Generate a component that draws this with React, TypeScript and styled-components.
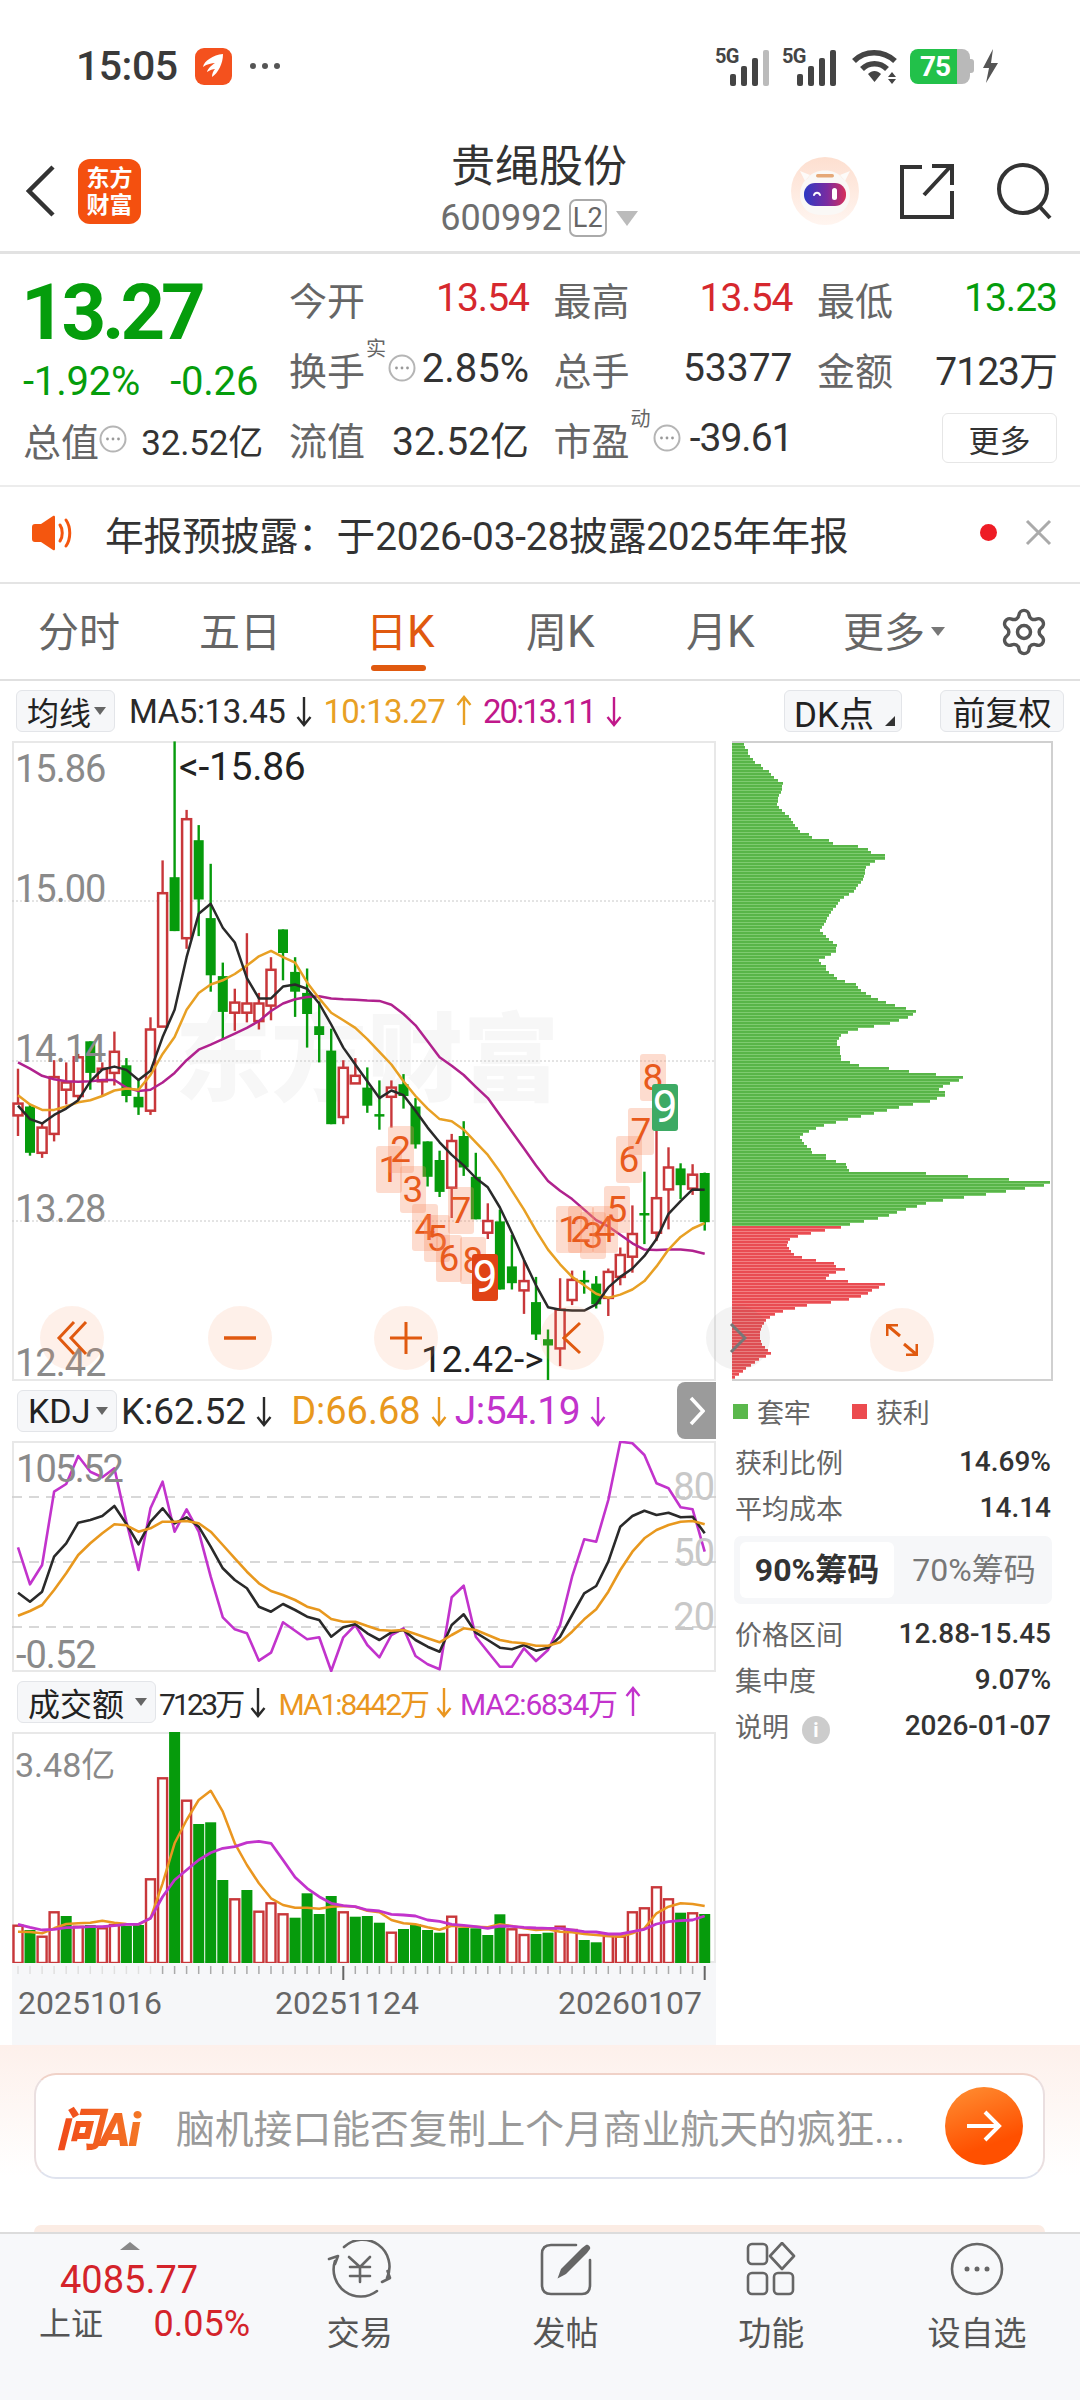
import * as React from 'react';
import styled, { createGlobalStyle } from 'styled-components';
import { Settings } from 'lucide-react';

const FONT = `Roboto, "Noto Sans CJK SC", sans-serif`;

// chart data, read off the reference, in reference-crop units
const STEP = 26.105;
const cx = (i: number) => 39 + i * STEP;

const CANDLES: number[][] = [
  [805, 888, 916, 965, 0], [890, 895, 1005, 1012, 1], [935, 945, 1005, 1017, 0], [785, 825, 960, 978, 0],
  [790, 838, 855, 890, 0], [770, 778, 870, 880, 0], [740, 740, 815, 855, 1], [790, 805, 835, 868, 0],
  [717, 765, 815, 845, 0], [780, 797, 870, 885, 1], [830, 872, 897, 915, 1], [683, 712, 905, 915, 0],
  [310, 388, 705, 705, 0], [27, 350, 478, 478, 1], [190, 212, 495, 520, 0], [226, 262, 403, 490, 1],
  [318, 447, 583, 622, 1], [553, 585, 670, 735, 1], [615, 648, 672, 715, 0], [483, 650, 672, 695, 0],
  [625, 650, 692, 712, 0], [540, 570, 655, 690, 0], [474, 474, 530, 595, 1], [540, 575, 622, 682, 1],
  [567, 625, 675, 755, 1], [645, 704, 725, 790, 1], [710, 762, 937, 937, 1], [785, 803, 920, 937, 0],
  [780, 822, 840, 840, 0], [802, 850, 893, 910, 1], [833, 913, 917, 950, 1], [833, 850, 872, 945, 0],
  [818, 842, 870, 900, 1], [875, 895, 985, 995, 1], [978, 978, 1062, 1085, 1], [1000, 1022, 1098, 1110, 1],
  [960, 977, 1088, 1160, 0], [930, 965, 1040, 1060, 1], [1005, 1062, 1163, 1163, 1], [1125, 1167, 1195, 1210, 0],
  [1140, 1168, 1330, 1330, 1], [1200, 1275, 1315, 1330, 1], [1260, 1310, 1332, 1388, 0], [1300, 1360, 1437, 1450, 1],
  [1425, 1448, 1463, 1545, 1], [1303, 1378, 1470, 1512, 0], [1285, 1307, 1355, 1367, 0], [1285, 1307, 1312, 1340, 1],
  [1298, 1316, 1365, 1375, 1], [1280, 1288, 1350, 1393, 0], [1230, 1248, 1300, 1320, 0], [1130, 1198, 1252, 1290, 0],
  [1050, 1148, 1153, 1222, 1], [900, 1113, 1195, 1215, 0], [992, 1040, 1092, 1187, 0], [1030, 1042, 1082, 1115, 1],
  [1032, 1057, 1090, 1105, 0], [1052, 1053, 1170, 1190, 1],
];

const MA5 = [893, 925, 935, 915, 900, 880, 835, 807, 800, 808, 832, 810, 730, 665, 540, 437, 413, 470, 505, 590, 638, 638, 610, 605, 615, 650, 700, 755, 795, 835, 875, 857, 868, 905, 945, 980, 1010, 1035, 1065, 1087, 1135, 1195, 1260, 1320, 1372, 1378, 1380, 1380, 1365, 1325, 1300, 1280, 1250, 1210, 1150, 1120, 1092, 1093];
const MA10 = [868, 890, 903, 903, 895, 885, 880, 870, 857, 852, 855, 820, 770, 730, 665, 625, 605, 595, 580, 560, 538, 525, 540, 553, 600, 638, 672, 690, 708, 735, 765, 795, 835, 870, 900, 925, 930, 950, 980, 1010, 1050, 1095, 1140, 1190, 1235, 1270, 1300, 1320, 1340, 1350, 1342, 1330, 1310, 1275, 1235, 1205, 1185, 1172];
const MA20 = [790, 805, 822, 830, 835, 836, 835, 832, 832, 850, 858, 855, 838, 815, 785, 760, 748, 735, 722, 708, 692, 668, 650, 640, 635, 633, 638, 640, 641, 643, 644, 653, 675, 702, 740, 778, 798, 820, 848, 875, 915, 955, 995, 1035, 1072, 1095, 1115, 1140, 1165, 1180, 1200, 1220, 1235, 1236, 1235, 1235, 1238, 1245];

const K_LINE = [638, 665, 635, 530, 490, 428, 420, 408, 378, 432, 493, 425, 385, 430, 412, 440, 500, 565, 600, 625, 680, 695, 672, 690, 710, 720, 770, 742, 733, 760, 780, 757, 750, 780, 800, 815, 735, 703, 758, 780, 803, 808, 795, 812, 803, 770, 705, 640, 618, 545, 440, 408, 392, 405, 398, 412, 410, 460];
const D_LINE = [707, 693, 675, 630, 580, 525, 490, 460, 433, 436, 455, 445, 425, 425, 423, 430, 455, 495, 535, 575, 610, 633, 645, 660, 680, 690, 717, 725, 725, 738, 750, 752, 750, 762, 775, 787, 765, 745, 750, 765, 780, 787, 790, 797, 797, 787, 755, 718, 688, 635, 570, 515, 475, 450, 435, 425, 423, 433];
const J_LINE = [502, 613, 555, 335, 312, 228, 275, 292, 265, 425, 570, 385, 305, 455, 388, 455, 590, 712, 748, 760, 842, 818, 727, 752, 778, 772, 873, 772, 735, 795, 832, 765, 745, 828, 853, 868, 652, 617, 770, 815, 860, 860, 805, 843, 810, 735, 590, 478, 485, 360, 185, 190, 225, 310, 325, 382, 388, 515];

const VOL = [737, 750, 770, 697, 708, 740, 735, 745, 735, 738, 735, 598, 295, 155, 362, 432, 427, 600, 658, 630, 695, 670, 703, 713, 640, 702, 648, 697, 710, 708, 728, 758, 747, 733, 750, 758, 710, 743, 745, 765, 703, 748, 765, 762, 758, 740, 750, 780, 787, 768, 770, 697, 685, 622, 658, 698, 700, 702];
const VOL_GREEN = [1, 4, 6, 9, 10, 13, 15, 16, 17, 19, 23, 24, 25, 26, 28, 29, 30, 32, 33, 34, 35, 37, 38, 39, 40, 43, 44, 47, 48, 55, 57];
const VOL_MA1 = [755, 756, 760, 745, 732, 730, 728, 722, 728, 732, 733, 715, 610, 490, 420, 360, 332, 395, 490, 555, 610, 655, 675, 683, 683, 686, 680, 678, 680, 692, 697, 720, 730, 733, 742, 749, 737, 740, 740, 742, 733, 738, 745, 750, 748, 755, 757, 762, 765, 768, 770, 760, 745, 700, 680, 670, 672, 678];
const VOL_MA2 = [733, 742, 750, 748, 743, 742, 740, 740, 737, 733, 733, 715, 650, 600, 570, 540, 518, 505, 500, 488, 484, 490, 540, 592, 625, 650, 670, 677, 680, 690, 693, 703, 705, 708, 720, 724, 733, 736, 740, 745, 738, 739, 742, 744, 745, 745, 750, 755, 756, 762, 762, 755, 748, 732, 725, 722, 720, 708];

const CHIP_GREEN = [[27, 75], [45, 85], [65, 100], [80, 125], [95, 150], [120, 190], [135, 188], [150, 178], [170, 172], [200, 210], [230, 235], [245, 270], [260, 330], [270, 415], [280, 445], [290, 480], [297, 497], [305, 465], [318, 440], [345, 432], [375, 405], [395, 365], [425, 335], [470, 302], [490, 330], [505, 352], [520, 350], [540, 297], [560, 320], [580, 345], [600, 410], [620, 440], [640, 500], [655, 560], [663, 590], [675, 565], [690, 510], [705, 405], [718, 365], [735, 350], [750, 362], [775, 365], [790, 420], [800, 510], [810, 570], [815, 650], [822, 730], [835, 680], [850, 650], [860, 677], [875, 630], [885, 560], [895, 510], [905, 455], [915, 400], [930, 320], [945, 270], [958, 240], [975, 255], [995, 275], [1010, 320], [1025, 380], [1040, 390], [1050, 620], [1060, 745], [1065, 870], [1072, 993], [1080, 930], [1090, 850], [1098, 780], [1105, 715], [1115, 630], [1125, 590], [1135, 545], [1148, 500], [1155, 465], [1165, 400], [1170, 380]];
const CHIP_RED = [[1172, 380], [1180, 325], [1190, 265], [1200, 215], [1215, 200], [1240, 225], [1255, 290], [1265, 345], [1275, 378], [1285, 335], [1295, 315], [1303, 385], [1312, 497], [1320, 465], [1330, 450], [1340, 420], [1350, 360], [1360, 260], [1375, 185], [1385, 155], [1400, 135], [1425, 120], [1450, 125], [1475, 155], [1490, 115], [1510, 80], [1535, 40]];

// nine-turn markers, centre in px inside the price chart
const MARKS = [
  [147, 507, '1'], [182, 446, '2'], [219, 568, '3'], [255, 680, '4'], [291, 715, '5'], [327, 775, '6'], [363, 630, '7'], [399, 781, '8'],
  [686, 688, '1'], [722, 688, '2'], [759, 705, '3'], [795, 688, '4'], [831, 628, '5'], [867, 476, '6'], [903, 392, '7'], [939, 230, '8'],
].map(([x, y, t]) => ({ left: 340 + (x as number) / 3 - 12, top: 1000 + (y as number) / 3 - 741, text: t as string }));

const priceX = (z: number) => +(z / 2.167 - 12).toFixed(1);
const priceY = (z: number) => +(z / 2.377 - 11).toFixed(1);
const kdjY = (z: number) => +(z / 3 - 61).toFixed(1);
const volY = (z: number) => +(z / 3 - 52).toFixed(1);

const linePoints = (series: number[], toY: (z: number) => number) =>
  series.map((v, i) => `${priceX(cx(i))},${toY(v)}`).join(' ');

// widest point of the profile between two heights, so thin peaks are not lost
const chipWidth = (points: number[][], from: number, to: number) => {
  let best = 0;
  for (let i = 1; i < points.length; i++) {
    const [y0, x0] = points[i - 1];
    const [y1, x1] = points[i];
    if (y0 >= from && y0 < to) best = Math.max(best, x0);
    if (from >= y0 && from <= y1) best = Math.max(best, x0 + ((x1 - x0) * (from - y0)) / (y1 - y0));
  }
  return best;
};

const GlobalStyle = createGlobalStyle`
  html, body { margin: 0; padding: 0; background: #fff; }
  * { box-sizing: border-box; }
`;

const Page = styled.div`
  width: 1080px;
  height: 2400px;
  overflow: hidden;
  background: #fff;
  font-family: ${FONT};
  color: #333;
`;

const StatusBar = styled.div`
  height: 130px;
  padding: 46px 81px 0 76px;
  display: flex;
  justify-content: space-between;
  align-items: flex-start;
`;

const StatusGroup = styled.div`
  display: flex;
  align-items: center;
  height: 40px;
`;

const Clock = styled.span`
  font-size: 41px;
  font-weight: 500;
  color: #3a3a3a;
  letter-spacing: -0.5px;
  margin-right: 17px;
`;

const AppBadge = styled.div`
  width: 37px;
  height: 37px;
  border-radius: 9px;
  background: #f4511e;
  display: flex;
  align-items: center;
  justify-content: center;
  margin-right: 17px;
`;

const SignalWrap = styled.div`
  display: flex;
  align-items: flex-end;
  height: 40px;
`;

const SignalName = styled.span`
  align-self: flex-start;
  font-size: 20px;
  line-height: 20px;
  font-weight: 700;
  color: #444;
  width: 26px;
  margin-right: -11px;
  letter-spacing: -0.6px;
`;

const BatteryBody = styled.div`
  width: 60px;
  height: 35px;
  border-radius: 8px;
  background: linear-gradient(90deg, #22c14a 0 79%, #b9b9b9 79%);
  color: #fff;
  font-size: 28px;
  font-weight: 700;
  display: flex;
  align-items: center;
  justify-content: center;
  padding-right: 10px;
  letter-spacing: -1px;
`;

const BatteryNub = styled.div`
  width: 4px;
  height: 14px;
  background: #b9b9b9;
  border-radius: 0 3px 3px 0;
`;

const Header = styled.header`
  height: 124px;
  display: grid;
  grid-template-columns: 1fr auto 1fr;
  align-items: center;
  border-bottom: 3px solid #e2e2e2;
  padding: 0 28px 0 26px;
`;

const HeaderLeft = styled.div`
  display: flex;
  align-items: center;
  gap: 23px;
  padding-top: 1px;
`;

const Logo = styled.div`
  width: 63px;
  height: 65px;
  border-radius: 12px;
  background: #f4500f;
  color: #fff;
  font-size: 23px;
  line-height: 27px;
  text-align: center;
  padding-top: 6px;
  font-weight: 700;
`;

const HeaderTitle = styled.div`
  display: flex;
  flex-direction: column;
  align-items: center;
`;

const StockName = styled.div`
  font-size: 44px;
  line-height: 56px;
  color: #333;
  margin-top: -3px;
`;

const StockCode = styled.div`
  display: flex;
  align-items: center;
  font-size: 36px;
  line-height: 42px;
  color: #6e6e6e;
  margin-top: 2px;
`;

const LevelTag = styled.span`
  width: 38px;
  height: 38px;
  border: 2px solid #aaa;
  border-radius: 7px;
  font-size: 27px;
  line-height: 34px;
  text-align: center;
  margin: 0 9px 0 7px;
  color: #666;
`;

const DownTriangle = styled.span<{ $w: number; $color?: string }>`
  display: inline-block;
  width: 0;
  height: 0;
  border-left: ${(p) => p.$w}px solid transparent;
  border-right: ${(p) => p.$w}px solid transparent;
  border-top: ${(p) => p.$w * 1.4}px solid ${(p) => p.$color ?? '#bbb'};
`;

const HeaderRight = styled.div`
  display: flex;
  justify-content: flex-end;
  align-items: center;
  padding-top: 1px;
`;

const Avatar = styled.div`
  width: 70px;
  height: 70px;
  margin-right: 40px;
`;

const QuotePanel = styled.section`
  height: 233px;
  padding: 9px 22px 0 24px;
  display: flex;
  border-bottom: 2px solid #ececec;
`;

const PriceColumn = styled.div`
  width: 265px;
  display: flex;
  flex-direction: column;
`;

const MainPrice = styled.div`
  height: 84px;
  margin: 4px 0 0 -3px;
  font-size: 78px;
  line-height: 92px;
  font-weight: 700;
  color: #059d0c;
  letter-spacing: -4.2px;
`;

const ChangeRow = styled.div`
  height: 52px;
  display: flex;
  font-size: 40px;
  line-height: 50px;
  color: #059d0c;
  gap: 30px;
  margin: 6px 0 0 -1px;
  letter-spacing: -0.2px;
`;

const QuoteGrid = styled.div`
  flex: 1;
  display: grid;
  grid-template-columns: 240px 239px 240px;
  column-gap: 24.5px;
  grid-auto-rows: 70px;
`;

const Cell = styled.div<{ $w?: number; $h?: number }>`
  ${(p) => (p.$w ? `width: ${p.$w}px;` : '')}
  ${(p) => (p.$h ? `height: ${p.$h}px;` : '')}
  display: flex;
  align-items: center;
  justify-content: space-between;
  position: relative;
`;

const LeftCell = styled(Cell)`
  margin: -3px 0 0 -1px;
`;

const CellLabel = styled.span`
  display: flex;
  align-items: center;
  color: #666;
  font-size: 38px;
`;

const CellValue = styled.span<{ $color?: string; $size?: number; $ls?: number }>`
  color: ${(p) => p.$color ?? '#333'};
  font-size: ${(p) => p.$size ?? 39}px;
  letter-spacing: ${(p) => p.$ls ?? 0}px;
  white-space: nowrap;
`;

const SupText = styled.sup`
  font-size: 20px;
  line-height: 20px;
  color: #666;
  align-self: flex-start;
  margin: -2px 2px 0 1px;
`;

const MoreButton = styled.button`
  margin-left: auto;
  width: 115px;
  height: 50px;
  border: 1.5px solid #e6e6e6;
  border-radius: 6px;
  background: #fff;
  font-family: ${FONT};
  font-size: 31px;
  color: #333;
  padding: 0;
`;

const Notice = styled.section`
  height: 97px;
  display: flex;
  align-items: center;
  padding: 0 28px 4px 31px;
  border-bottom: 2px solid #e4e4e4;
`;

const NoticeText = styled.span`
  flex: 1;
  margin-left: 31px;
  font-size: 38.8px;
  letter-spacing: -0.2px;
  color: #333;
  white-space: nowrap;
`;

const NoticeDot = styled.span`
  width: 17px;
  height: 17px;
  border-radius: 50%;
  background: #ee1c25;
  margin-right: 28px;
`;

const Tabs = styled.nav`
  height: 97px;
  display: flex;
  align-items: center;
  padding-left: 38px;
  border-bottom: 2px solid #e0e0e0;
  position: relative;
`;

const Tab = styled.div<{ $active?: boolean; $width: number }>`
  width: ${(p) => p.$width}px;
  font-size: 41px;
  line-height: 50px;
  padding-top: 2px;
  color: ${(p) => (p.$active ? '#e0590f' : '#666')};
  position: relative;
  &::after {
    content: '';
    display: ${(p) => (p.$active ? 'block' : 'none')};
    position: absolute;
    left: 5px;
    top: 60px;
    width: 55px;
    height: 6px;
    border-radius: 3px;
    background: #e0590f;
  }
`;

const TabSuffix = styled.span`
  font-size: 44px;
  letter-spacing: 1px;
`;

const ToolRow = styled.div`
  height: 60px;
  display: flex;
  align-items: center;
  padding: 0 16px;
  gap: 10px;
`;

const DropButton = styled.div<{ $width: number; $size?: number }>`
  width: ${(p) => p.$width}px;
  height: 42px;
  background: #f6f7f9;
  border: 1.5px solid #e3e5e9;
  border-radius: 6px;
  display: flex;
  align-items: center;
  justify-content: space-between;
  padding: 0 8px 0 10px;
  font-size: ${(p) => p.$size ?? 32}px;
  color: #222;
  flex-shrink: 0;
`;

const Legend = styled.span<{ $color: string; $size?: number; $ls?: number; $ml?: number }>`
  color: ${(p) => p.$color};
  font-size: ${(p) => p.$size ?? 33}px;
  letter-spacing: ${(p) => p.$ls ?? -0.2}px;
  margin-left: ${(p) => p.$ml ?? 0}px;
  white-space: nowrap;
`;

const ToolSpacer = styled.div<{ $w?: number }>`
  ${(p) => (p.$w ? `width: ${p.$w}px;` : 'flex: 1;')}
`;

const CornerMark = styled.span`
  position: absolute;
  right: 6px;
  bottom: 5px;
  width: 0;
  height: 0;
  border-left: 10px solid transparent;
  border-bottom: 10px solid #333;
`;

const SwitchButton = styled.div<{ $width: number; $size?: number; $pad?: number }>`
  position: relative;
  width: ${(p) => p.$width}px;
  height: 42px;
  background: #f6f7f9;
  border: 1.5px solid #e3e5e9;
  border-radius: 6px;
  display: flex;
  align-items: center;
  justify-content: center;
  font-size: ${(p) => p.$size ?? 33}px;
  padding-right: ${(p) => p.$pad ?? 0}px;
  color: #222;
  flex-shrink: 0;
`;

const ChartsRow = styled.div`
  height: 1304px;
  position: relative;
  display: flex;
  padding-left: 12px;
`;

const LeftColumn = styled.div`
  width: 704px;
  display: flex;
  flex-direction: column;
`;

const RightColumn = styled.div`
  width: 321px;
  margin-left: 16px;
  display: flex;
  flex-direction: column;
`;

const ChartBox = styled.div<{ $h: number }>`
  position: relative;
  width: 704px;
  height: ${(p) => p.$h}px;
  overflow: hidden;
  flex-shrink: 0;
  outline: 2px solid #e8e8e8;
  outline-offset: -2px;
`;

const ChartSvg = styled.svg`
  position: absolute;
  left: 0;
  top: 0;
`;

const Watermark = styled.div`
  position: absolute;
  left: 163px;
  top: 264px;
  font-size: 96px;
  line-height: 110px;
  font-weight: 900;
  color: #f7f7f7;
  white-space: nowrap;
`;

const AxisLabel = styled.span<{ $left?: number; $right?: number; $top: number; $color?: string; $size?: number; $ls?: number }>`
  position: absolute;
  ${(p) => (p.$right !== undefined ? `right: ${p.$right}px;` : `left: ${p.$left}px;`)}
  top: ${(p) => p.$top}px;
  transform: translateY(-50%);
  font-size: ${(p) => p.$size ?? 38}px;
  letter-spacing: ${(p) => p.$ls ?? -1}px;
  line-height: 34px;
  color: ${(p) => p.$color ?? '#8a8a8a'};
  white-space: nowrap;
`;

const TurnMark = styled.span<{ $bg?: string; $color?: string; $size?: number }>`
  position: absolute;
  width: 26px;
  height: 47px;
  margin: -23px 0 0 -13px;
  border-radius: 3px;
  background: ${(p) => p.$bg ?? 'rgba(250, 140, 95, 0.3)'};
  color: ${(p) => p.$color ?? '#e85a1c'};
  font-size: ${(p) => p.$size ?? 37}px;
  line-height: 47px;
  text-align: center;
`;

const RoundButton = styled.div<{ $left: number; $top: number; $gray?: boolean }>`
  position: absolute;
  left: ${(p) => p.$left - 32}px;
  top: ${(p) => p.$top - 32}px;
  width: 64px;
  height: 64px;
  border-radius: 50%;
  background: ${(p) => (p.$gray ? 'rgba(100, 100, 100, 0.08)' : 'rgba(245, 150, 100, 0.14)')};
  display: flex;
  align-items: center;
  justify-content: center;
`;

const IndicatorBar = styled.div<{ $gap?: number }>`
  height: 60px;
  display: flex;
  align-items: center;
  padding-left: 5px;
  gap: ${(p) => p.$gap ?? 9}px;
  position: relative;
  flex-shrink: 0;
`;

const SidePager = styled.div`
  position: absolute;
  right: 0;
  top: 1px;
  width: 39px;
  height: 57px;
  background: #9b9b9b;
  border-radius: 8px 0 0 8px;
  display: flex;
  align-items: center;
  justify-content: center;
`;

const DateStrip = styled.div`
  height: 82px;
  background: #f6f7f9;
  position: relative;
  display: grid;
  grid-template-columns: 257px 283px auto;
  padding: 19px 0 0 6px;
  font-size: 32px;
  line-height: 42px;
  color: #666;
`;

const ChipBox = styled.div`
  width: 321px;
  height: 640px;
  position: relative;
  border: 2px solid #d0d0d0;
  border-left: none;
`;

const ChipLegend = styled.div`
  height: 60px;
  display: flex;
  align-items: center;
  font-size: 27px;
  color: #666;
  padding-left: 1px;
`;

const ChipSwatch = styled.span<{ $color: string }>`
  width: 15px;
  height: 15px;
  background: ${(p) => p.$color};
  margin-right: 9px;
`;

const ChipLegendName = styled.span`
  width: 95px;
  letter-spacing: -0.3px;
`;

const ChipRow = styled.div<{ $h: number }>`
  height: ${(p) => p.$h}px;
  display: flex;
  align-items: center;
  justify-content: space-between;
  padding: 0 2px 0 3px;
  font-size: 27px;
  color: #666;
`;

const FirstChipRow = styled(ChipRow)`
  margin-top: -3px;
`;

const ChipValue = styled.span`
  font-size: 28px;
  font-weight: 500;
  color: #333;
`;

const InfoDot = styled.span`
  width: 28px;
  height: 28px;
  border-radius: 50%;
  background: #ccc;
  color: #fff;
  font-size: 20px;
  font-weight: 700;
  line-height: 28px;
  text-align: center;
  margin-left: 13px;
  display: inline-block;
`;

const RangeTabs = styled.div`
  height: 68px;
  margin: 6px 1px 6px 2px;
  padding: 6px;
  border-radius: 7px;
  background: #f6f7f9;
  display: grid;
  grid-template-columns: 154px 1fr;
  font-size: 32px;
  text-align: center;
`;

const RangeTab = styled.div<{ $active?: boolean }>`
  line-height: 56px;
  border-radius: 6px;
  background: ${(p) => (p.$active ? '#fff' : 'transparent')};
  color: ${(p) => (p.$active ? '#333' : '#777')};
  font-weight: ${(p) => (p.$active ? 700 : 400)};
  padding-left: ${(p) => (p.$active ? 0 : 8)}px;
`;

const AiSection = styled.section`
  height: 187px;
  padding: 28px 35px 0 34px;
  background: linear-gradient(#fdf0eb, #fff 70%);
  display: flex;
  flex-direction: column;
  justify-content: space-between;
`;

const AiInput = styled.div`
  height: 106px;
  border-radius: 22px;
  background: #fff;
  border: 2px solid;
  border-color: #f0d2c8 #eadfe0 #dfe3ee;
  display: flex;
  align-items: center;
  padding: 0 20px;
`;

const AiLogo = styled.span`
  font-size: 46px;
  font-weight: 900;
  font-style: italic;
  letter-spacing: -2px;
  width: 120px;
  flex-shrink: 0;
  background: linear-gradient(90deg, #f0481a, #f58a2a);
  -webkit-background-clip: text;
  background-clip: text;
  color: transparent;
`;

const AiText = styled.span`
  flex: 1;
  font-size: 38.8px;
  color: #9a9a9a;
  white-space: nowrap;
  overflow: hidden;
`;

const AiSend = styled.div`
  width: 78px;
  height: 78px;
  border-radius: 50%;
  background: linear-gradient(160deg, #ff9034, #ff5000 70%);
  display: flex;
  align-items: center;
  justify-content: center;
  flex-shrink: 0;
`;

const PeekCard = styled.div`
  height: 7px;
  border-radius: 18px 18px 0 0;
  background: #fbece4;
`;

const BottomNav = styled.nav`
  height: 168px;
  background: #f7f8fa;
  border-top: 2px solid #dcdcdc;
  display: grid;
  grid-template-columns: 257px repeat(4, 205.7px);
`;

const IndexCell = styled.div`
  padding: 8px 0 0 39px;
  display: flex;
  flex-direction: column;
`;

const UpTriangle = styled.span`
  width: 0;
  height: 0;
  margin-left: 81px;
  border-left: 10px solid transparent;
  border-right: 10px solid transparent;
  border-bottom: 8px solid #888;
`;

const IndexValue = styled.div`
  font-size: 38px;
  line-height: 44px;
  margin: 8px 0 0 21px;
  color: #d4232a;
`;

const IndexRow = styled.div`
  display: flex;
  align-items: center;
  justify-content: space-between;
  font-size: 32px;
  line-height: 44px;
  color: #555;
  width: 211px;
`;

const IndexChange = styled.span`
  font-size: 36px;
  color: #d4232a;
`;

const NavItem = styled.div`
  padding-top: 7px;
  display: flex;
  flex-direction: column;
  align-items: center;
  font-size: 33px;
  color: #555;
`;

const NavIcon = styled.div`
  height: 56px;
  display: flex;
  align-items: center;
  justify-content: center;
  margin-bottom: 15px;
`;

const NavLabel = styled.span`
  line-height: 44px;
`;

const ArrowMark = ({ up, color }: { up?: boolean; color: string }) => (
  <svg width="18" height="32" viewBox="0 0 18 32" style={{ flexShrink: 0 }}>
    <path
      d={up ? 'M9 30V2M2.5 10L9 2L15.5 10' : 'M9 2V30M2.5 22L9 30L15.5 22'}
      fill="none"
      stroke={color}
      strokeWidth="2.4"
    />
  </svg>
);

const DotsRing = () => (
  <svg width="28" height="28" viewBox="0 0 28 28" style={{ flexShrink: 0 }}>
    <circle cx="14" cy="14" r="12.5" fill="none" stroke="#b5b5b5" strokeWidth="2" />
    <circle cx="8.5" cy="14" r="1.4" fill="#999" />
    <circle cx="14" cy="14" r="1.4" fill="#999" />
    <circle cx="19.5" cy="14" r="1.4" fill="#999" />
  </svg>
);

const SignalIcon = ({ dim }: { dim?: boolean }) => (
  <SignalWrap>
    <SignalName>5G</SignalName>
    <svg width="43" height="36" viewBox="0 0 43 36" style={{ display: 'block' }}>
      <rect x="0" y="24" width="6" height="12" rx="2" fill="#444" />
      <rect x="11" y="16" width="6" height="20" rx="2" fill="#444" />
      <rect x="22" y="8" width="6" height="28" rx="2" fill="#444" />
      <rect x="33" y="0" width="6" height="36" rx="2" fill={dim ? '#bbb' : '#444'} />
    </svg>
  </SignalWrap>
);

const RobotAvatar = () => (
  <svg width="70" height="70" viewBox="0 0 70 70" style={{ display: 'block' }}>
    <defs>
      <linearGradient id="halo" x1="0" x2="0" y1="0" y2="1">
        <stop offset="0" stopColor="#fddfd0" />
        <stop offset="1" stopColor="#fff5f0" />
      </linearGradient>
      <linearGradient id="visor" x1="0" x2="1">
        <stop offset="0" stopColor="#2c3bc4" />
        <stop offset="0.55" stopColor="#7a2ba0" />
        <stop offset="1" stopColor="#d6305a" />
      </linearGradient>
    </defs>
    <circle cx="35" cy="35" r="34" fill="url(#halo)" />
    <path d="M10 15L15 25L20 19zM60 15L55 25L50 19z" fill="#fdfbf9" />
    <path d="M18 22C24 12 46 12 52 22C60 27 62 40 58 48C54 58 44 59 35 59S16 58 12 48C8 40 10 27 18 22z" fill="#faf8f6" />
    <rect x="26" y="18" width="18" height="3.500" rx="1.700" fill="#e5a877" />
    <rect x="14" y="27" width="42" height="23" rx="11" fill="url(#visor)" />
    <path d="M24 39c1-3 5-3 6 0" fill="none" stroke="#fff" strokeWidth="2" strokeLinecap="round" />
    <rect x="42" y="32" width="5" height="12" rx="2.500" fill="#fff" />
  </svg>
);

const PriceChart = () => {
  const grid = [160, 320, 480];
  return (
    <ChartSvg width="704" height="640">
      {grid.map((y) => (
        <line key={y} x1="0" x2="704" y1={y} y2={y} stroke="#c8c8c8" strokeWidth="1" strokeDasharray="2 2" />
      ))}
      {CANDLES.map(([hi, top, bot, lo, green], i) => {
        const x = priceX(cx(i));
        const color = green ? '#069b0c' : '#c8373a';
        const bodyH = priceY(bot) - priceY(top);
        return (
          <g key={i}>
            <line x1={x} x2={x} y1={priceY(hi)} y2={priceY(lo)} stroke={color} strokeWidth="2.4" />
            {green ? (
              <rect x={x - 5} y={priceY(top)} width="10" height={Math.max(bodyH, 2.5)} fill={color} />
            ) : (
              <rect x={x - 4.5} y={priceY(top)} width="9" height={bodyH} fill="#fff" stroke={color} strokeWidth="2.5" />
            )}
          </g>
        );
      })}
      <polyline points={linePoints(MA20, priceY)} fill="none" stroke="#b0228e" strokeWidth="2.5" strokeLinejoin="round" />
      <polyline points={linePoints(MA10, priceY)} fill="none" stroke="#e8a024" strokeWidth="2.5" strokeLinejoin="round" />
      <polyline points={linePoints(MA5, priceY)} fill="none" stroke="#2a2a2a" strokeWidth="2.5" strokeLinejoin="round" />
    </ChartSvg>
  );
};

const KdjChart = () => (
  <ChartSvg width="704" height="231">
    {[56, 121, 186].map((y) => (
      <line key={y} x1="0" x2="704" y1={y} y2={y} stroke="#ccc" strokeWidth="1.5" strokeDasharray="10 7" />
    ))}
    <polyline points={linePoints(J_LINE, kdjY)} fill="none" stroke="#c233cc" strokeWidth="2.6" strokeLinejoin="round" />
    <polyline points={linePoints(K_LINE, kdjY)} fill="none" stroke="#2a2a2a" strokeWidth="2.6" strokeLinejoin="round" />
    <polyline points={linePoints(D_LINE, kdjY)} fill="none" stroke="#e8981e" strokeWidth="2.6" strokeLinejoin="round" />
  </ChartSvg>
);

const VolumeChart = () => (
  <ChartSvg width="704" height="231">
    {VOL.map((top, i) => {
      const x = priceX(cx(i));
      const y = volY(top);
      return VOL_GREEN.includes(i) ? (
        <rect key={i} x={x - 5.5} y={y} width="11" height={231 - y} fill="#069b0c" />
      ) : (
        <rect key={i} x={x - 4.5} y={y} width="9" height={231 - y} fill="#fff" stroke="#c8373a" strokeWidth="2.4" />
      );
    })}
    <polyline points={linePoints(VOL_MA1, volY)} fill="none" stroke="#ea9620" strokeWidth="2.5" strokeLinejoin="round" />
    <polyline points={linePoints(VOL_MA2, volY)} fill="none" stroke="#c233cc" strokeWidth="2.8" strokeLinejoin="round" />
  </ChartSvg>
);

const ChipChart = () => {
  const rows: React.ReactNode[] = [];
  for (let y = 0; y < 635; y += 3) {
    const z = (y + 11) * 2.377;
    const red = z >= 1171;
    const source = red ? CHIP_RED : CHIP_GREEN;
    if (z > 1535) break;
    const w = Math.max(0, (chipWidth(source, z, z + 7.13) - 38) / 3);
    rows.push(
      <g key={y}>
        <rect x="0" y={y} width={w} height="2" fill={red ? '#e94c52' : '#58b548'} />
        <rect x="0" y={y + 2} width={w} height="1" fill={red ? '#f28082' : '#7ecb70'} />
      </g>,
    );
  }
  return (
    <ChartSvg width="320" height="636" shapeRendering="crispEdges">
      {rows}
    </ChartSvg>
  );
};

const DateTicks = () => (
  <ChartSvg width="704" height="20">
    {CANDLES.map((_, i) => {
      const x = priceX(cx(i));
      const major = i === 27 || i === 57;
      return (
        <line
          key={i}
          x1={x}
          x2={x}
          y1="3"
          y2={major ? 17 : 11}
          stroke={i < 12 ? '#e0e0e0' : major ? '#666' : '#aaa'}
          strokeWidth={major ? 2 : 1.5}
        />
      );
    })}
  </ChartSvg>
);

const stroke = { fill: 'none', stroke: '#666', strokeWidth: 2.6, strokeLinecap: 'round' as const, strokeLinejoin: 'round' as const };

export default function App() {
  return (
    <Page>
      <GlobalStyle />
      <StatusBar>
        <StatusGroup>
          <Clock>15:05</Clock>
          <AppBadge>
            <svg width="24" height="28" viewBox="0 0 24 28">
              <path d="M22 2C12 3 3 9 2 15c4-3 9-4 12-4-3 2-7 5-8 9 3-2 6-3 8-3-2 2-3 5-3 8 6-4 11-13 11-23z" fill="#fff" />
            </svg>
          </AppBadge>
          <svg width="32" height="8" viewBox="0 0 32 8">
            <circle cx="4" cy="4" r="3" fill="#555" />
            <circle cx="16" cy="4" r="3" fill="#555" />
            <circle cx="28" cy="4" r="3" fill="#555" />
          </svg>
        </StatusGroup>
        <StatusGroup>
          <SignalIcon dim />
          <ToolSpacer $w={9} />
          <SignalIcon />
          <svg width="48" height="36" viewBox="0 0 48 36" style={{ margin: '0 11px 0 11px' }}>
            <path d="M3 13C14 2 32 2 44 13" fill="none" stroke="#444" strokeWidth="5.5" />
            <path d="M11 21C18 14 29 14 36 21" fill="none" stroke="#444" strokeWidth="5.5" />
            <path d="M17 26C21 22 26 22 30 26L23.5 34z" fill="#444" />
            <path d="M41 24l4 5h-8zM41 36l4-5h-8z" fill="#444" />
          </svg>
          <BatteryBody>75</BatteryBody>
          <BatteryNub />
          <svg width="17" height="34" viewBox="0 0 17 34" style={{ marginLeft: 8 }}>
            <path d="M11 0L1 19h6L4 34l12-20H9z" fill="#555" />
          </svg>
        </StatusGroup>
      </StatusBar>

      <Header>
        <HeaderLeft>
          <svg width="29" height="52" viewBox="0 0 29 52">
            <path d="M27 2L3 26L27 50" fill="none" stroke="#333" strokeWidth="4.5" />
          </svg>
          <Logo>
            东方
            <br />
            财富
          </Logo>
        </HeaderLeft>
        <HeaderTitle>
          <StockName>贵绳股份</StockName>
          <StockCode>
            600992
            <LevelTag>L2</LevelTag>
            <DownTriangle $w={11} />
          </StockCode>
        </HeaderTitle>
        <HeaderRight>
          <Avatar>
            <RobotAvatar />
          </Avatar>
          <svg width="54" height="56" viewBox="0 0 54 56" style={{ marginRight: 42 }}>
            <path d="M22 4H2V54H52V28" fill="none" stroke="#333" strokeWidth="4" />
            <path d="M24 32L50 4M32 3H52V22" fill="none" stroke="#333" strokeWidth="4" />
          </svg>
          <svg width="56" height="58" viewBox="0 0 56 58">
            <circle cx="27" cy="27" r="24" fill="none" stroke="#333" strokeWidth="4" />
            <path d="M43 44L54 56" fill="none" stroke="#333" strokeWidth="4" />
          </svg>
        </HeaderRight>
      </Header>

      <QuotePanel>
        <PriceColumn>
          <MainPrice>13.27</MainPrice>
          <ChangeRow>
            <span>-1.92%</span>
            <span>-0.26</span>
          </ChangeRow>
          <LeftCell $w={240} $h={66}>
            <CellLabel>
              总值
              <DotsRing />
            </CellLabel>
            <CellValue $size={35} $ls={-0.2}>32.52亿</CellValue>
          </LeftCell>
        </PriceColumn>
        <QuoteGrid>
          <Cell>
            <CellLabel>今开</CellLabel>
            <CellValue $color="#d6282e" $ls={-1}>13.54</CellValue>
          </Cell>
          <Cell>
            <CellLabel>最高</CellLabel>
            <CellValue $color="#d6282e" $ls={-1}>13.54</CellValue>
          </Cell>
          <Cell>
            <CellLabel>最低</CellLabel>
            <CellValue $color="#059d0c" $ls={-1}>13.23</CellValue>
          </Cell>
          <Cell>
            <CellLabel>
              换手
              <SupText>实</SupText>
              <DotsRing />
            </CellLabel>
            <CellValue $size={40}>2.85%</CellValue>
          </Cell>
          <Cell>
            <CellLabel>总手</CellLabel>
            <CellValue>53377</CellValue>
          </Cell>
          <Cell>
            <CellLabel>金额</CellLabel>
            <CellValue $ls={-1}>7123万</CellValue>
          </Cell>
          <Cell>
            <CellLabel>流值</CellLabel>
            <CellValue>32.52亿</CellValue>
          </Cell>
          <Cell>
            <CellLabel>
              市盈
              <SupText>动</SupText>
              <DotsRing />
            </CellLabel>
            <CellValue $ls={-1}>-39.61</CellValue>
          </Cell>
          <Cell>
            <MoreButton>更多</MoreButton>
          </Cell>
        </QuoteGrid>
      </QuotePanel>

      <Notice>
        <svg width="43" height="36" viewBox="0 0 43 36" style={{ flexShrink: 0 }}>
          <path d="M1 12C1 10 2 9 4 9h6L22 1c1-.6 2 0 2 1v32c0 1-1 1.600-2 1L10 27H4c-2 0-3-1-3-3z" fill="#f4560f" />
          <path d="M29 10c3 4 3 12 0 16M35 5c5 7 5 19 0 26" fill="none" stroke="#f4560f" strokeWidth="3" strokeLinecap="round" />
        </svg>
        <NoticeText>年报预披露：于2026-03-28披露2025年年报</NoticeText>
        <NoticeDot />
        <svg width="27" height="27" viewBox="0 0 27 27">
          <path d="M2 2L25 25M25 2L2 25" fill="none" stroke="#aaa" strokeWidth="3" />
        </svg>
      </Notice>

      <Tabs>
        <Tab $width={161}>分时</Tab>
        <Tab $width={167}>五日</Tab>
        <Tab $active $width={160}>日<TabSuffix>K</TabSuffix></Tab>
        <Tab $width={160}>周<TabSuffix>K</TabSuffix></Tab>
        <Tab $width={157}>月<TabSuffix>K</TabSuffix></Tab>
        <Tab $width={88}>更多</Tab>
        <DownTriangle $w={7} $color="#777" />
        <ToolSpacer $w={53} />
        <Settings size={52} color="#555" strokeWidth={1.6} />
      </Tabs>

      <ToolRow>
        <DropButton $width={99}>
          均线
          <DownTriangle $w={6} $color="#666" />
        </DropButton>
        <Legend $color="#2a2a2a" $ls={-0.4} $ml={4}>MA5:13.45</Legend>
        <ArrowMark color="#2a2a2a" />
        <Legend $color="#e8a024" $ls={-0.8}>10:13.27</Legend>
        <ArrowMark up color="#e8a024" />
        <Legend $color="#c0188a" $ls={-2}>20:13.11</Legend>
        <ArrowMark color="#c0188a" />
        <ToolSpacer />
        <SwitchButton $width={118} $size={35} $pad={18}>
          DK点
          <CornerMark />
        </SwitchButton>
        <ToolSpacer $w={18} />
        <SwitchButton $width={124}>前复权</SwitchButton>
      </ToolRow>

      <ChartsRow>
        <LeftColumn>
          <ChartBox $h={640}>
            <Watermark>东方财富</Watermark>
            <PriceChart />
            {MARKS.map((m, i) => (
              <TurnMark key={i} style={{ left: m.left, top: m.top }}>
                {m.text}
              </TurnMark>
            ))}
            <TurnMark $bg="#e04315" $color="#fff" $size={44} style={{ left: 473, top: 536 }}>
              9
            </TurnMark>
            <TurnMark $bg="#3daa64" $color="#fff" $size={44} style={{ left: 653, top: 366 }}>
              9
            </TurnMark>
            <AxisLabel $left={3} $top={28}>15.86</AxisLabel>
            <AxisLabel $left={3} $top={148}>15.00</AxisLabel>
            <AxisLabel $left={3} $top={308}>14.14</AxisLabel>
            <AxisLabel $left={3} $top={468}>13.28</AxisLabel>
            <AxisLabel $left={3} $top={622}>12.42</AxisLabel>
            <AxisLabel $left={167} $top={26} $color="#222" $size={39} $ls={-0.3}>{'<-15.86'}</AxisLabel>
            <AxisLabel $left={409} $top={619} $color="#222" $size={37} $ls={0}>{'12.42->'}</AxisLabel>
            <RoundButton $left={60} $top={597}>
              <svg width="32" height="36" viewBox="0 0 32 36">
                <path d="M18 2L3 18L18 34M30 2L15 18L30 34" fill="none" stroke="#e0590f" strokeWidth="3" />
              </svg>
            </RoundButton>
            <RoundButton $left={228} $top={597}>
              <svg width="32" height="4" viewBox="0 0 32 4">
                <path d="M0 2H32" stroke="#e0590f" strokeWidth="3.5" />
              </svg>
            </RoundButton>
            <RoundButton $left={394} $top={597}>
              <svg width="32" height="32" viewBox="0 0 32 32">
                <path d="M0 16H32M16 0V32" stroke="#e0590f" strokeWidth="3" />
              </svg>
            </RoundButton>
            <RoundButton $left={560} $top={597}>
              <svg width="20" height="34" viewBox="0 0 20 34">
                <path d="M18 2L2 17L18 32" fill="none" stroke="#e0590f" strokeWidth="3" />
              </svg>
            </RoundButton>
          </ChartBox>

          <IndicatorBar>
            <DropButton $width={100} $size={34}>
              KDJ
              <DownTriangle $w={6} $color="#666" />
            </DropButton>
            <Legend $color="#2a2a2a" $size={37} $ls={0} $ml={-5}>K:62.52</Legend>
            <ArrowMark color="#2a2a2a" />
            <Legend $color="#e8981e" $size={38} $ls={0} $ml={9}>D:66.68</Legend>
            <ArrowMark color="#e8981e" />
            <Legend $color="#c233cc" $size={39} $ls={-0.5} $ml={-2}>J:54.19</Legend>
            <ArrowMark color="#c233cc" />
            <SidePager>
              <svg width="16" height="30" viewBox="0 0 16 30">
                <path d="M2 2L14 15L2 28" fill="none" stroke="#fff" strokeWidth="3.5" />
              </svg>
            </SidePager>
          </IndicatorBar>

          <ChartBox $h={231}>
            <KdjChart />
            <AxisLabel $left={4} $top={28} $ls={-1.8}>105.52</AxisLabel>
            <AxisLabel $left={4} $top={214}>-0.52</AxisLabel>
            <AxisLabel $right={2} $top={46} $color="#c8c8c8">80</AxisLabel>
            <AxisLabel $right={2} $top={112} $color="#c8c8c8">50</AxisLabel>
            <AxisLabel $right={2} $top={176} $color="#c8c8c8">20</AxisLabel>
          </ChartBox>

          <IndicatorBar $gap={7}>
            <DropButton $width={139}>
              成交额
              <DownTriangle $w={6} $color="#666" />
            </DropButton>
            <Legend $color="#2a2a2a" $size={30} $ls={-2.8} $ml={-4}>7123万</Legend>
            <ArrowMark color="#2a2a2a" />
            <Legend $color="#ea9620" $size={30} $ls={-2} $ml={4}>MA1:8442万</Legend>
            <ArrowMark color="#ea9620" />
            <Legend $color="#c233cc" $size={30} $ls={-1.2}>MA2:6834万</Legend>
            <ArrowMark up color="#c233cc" />
          </IndicatorBar>

          <ChartBox $h={231}>
            <VolumeChart />
            <AxisLabel $left={3} $top={33} $size={34} $ls={0}>3.48亿</AxisLabel>
          </ChartBox>

          <DateStrip>
            <DateTicks />
            <span>20251016</span>
            <span>20251124</span>
            <span>20260107</span>
          </DateStrip>
        </LeftColumn>

        <RightColumn>
          <ChipBox>
            <ChipChart />
            <RoundButton $left={170} $top={597}>
              <svg width="32" height="32" viewBox="0 0 32 32">
                <path d="M12 1H1V12M1 1L14 12M20 31H31V20M31 31L18 20" fill="none" stroke="#e0590f" strokeWidth="3" />
              </svg>
            </RoundButton>
          </ChipBox>
          <ChipLegend>
            <ChipSwatch $color="#5ab84c" />
            <ChipLegendName>套牢</ChipLegendName>
            <ChipSwatch $color="#ec4b4f" />
            <ChipLegendName>获利</ChipLegendName>
          </ChipLegend>
          <FirstChipRow $h={46}>
            获利比例
            <ChipValue>14.69%</ChipValue>
          </FirstChipRow>
          <ChipRow $h={46}>
            平均成本
            <ChipValue>14.14</ChipValue>
          </ChipRow>
          <RangeTabs>
            <RangeTab $active>90%筹码</RangeTab>
            <RangeTab>70%筹码</RangeTab>
          </RangeTabs>
          <ChipRow $h={46}>
            价格区间
            <ChipValue>12.88-15.45</ChipValue>
          </ChipRow>
          <ChipRow $h={46}>
            集中度
            <ChipValue>9.07%</ChipValue>
          </ChipRow>
          <ChipRow $h={46}>
            <span>
              说明
              <InfoDot>i</InfoDot>
            </span>
            <ChipValue>2026-01-07</ChipValue>
          </ChipRow>
        </RightColumn>

        <RoundButton $gray $left={738} $top={597}>
          <svg width="18" height="32" viewBox="0 0 18 32">
            <path d="M2 2L16 16L2 30" fill="none" stroke="#777" strokeWidth="3" />
          </svg>
        </RoundButton>
      </ChartsRow>

      <AiSection>
        <AiInput>
          <AiLogo>问Ai</AiLogo>
          <AiText>脑机接口能否复制上个月商业航天的疯狂...</AiText>
          <AiSend>
            <svg width="38" height="34" viewBox="0 0 38 34">
              <path d="M2 17H34M20 3L34 17L20 31" fill="none" stroke="#fff" strokeWidth="4" />
            </svg>
          </AiSend>
        </AiInput>
        <PeekCard />
      </AiSection>

      <BottomNav>
        <IndexCell>
          <UpTriangle />
          <IndexValue>4085.77</IndexValue>
          <IndexRow>
            上证
            <IndexChange>0.05%</IndexChange>
          </IndexRow>
        </IndexCell>
        <NavItem>
          <NavIcon>
            <svg width="66" height="58" viewBox="18 6 66 58">
              <path d="M35 13A27 27 0 0 1 78 44M73 48L81 44L78.500 37" {...stroke} />
              <path d="M68 57A27 27 0 0 1 26 27M20 25L29 22L26 30" {...stroke} />
              <path d="M40 23L51 33L61 23M41 33H61M41 42H61M51 33V48" {...stroke} />
            </svg>
          </NavIcon>
          <NavLabel>交易</NavLabel>
        </NavItem>
        <NavItem>
          <NavIcon>
            <svg width="54" height="55" viewBox="229 7 54 55">
              <path d="M266 10H241Q232 10 232 19V50Q232 59 241 59H272Q280 59 280 50V25" {...stroke} />
              <path d="M247.500 43.500L251 34L272 13L276 10C278 9 281 12 280 14L277 18L256 39z" fill="#666" />
            </svg>
          </NavIcon>
          <NavLabel>发帖</NavLabel>
        </NavItem>
        <NavItem>
          <NavIcon>
            <svg width="50" height="54" viewBox="0 0 50 54">
              <rect x="2" y="2" width="19" height="20" rx="4" {...stroke} />
              <path d="M36 1L48 14L36 27L24 14z" {...stroke} />
              <rect x="2" y="31" width="19" height="21" rx="4" {...stroke} />
              <rect x="28" y="31" width="19" height="21" rx="4" {...stroke} />
            </svg>
          </NavIcon>
          <NavLabel>功能</NavLabel>
        </NavItem>
        <NavItem>
          <NavIcon>
            <svg width="54" height="54" viewBox="0 0 54 54">
              <circle cx="27" cy="27" r="25" {...stroke} />
              <circle cx="17" cy="27" r="2.5" fill="#666" />
              <circle cx="27" cy="27" r="2.5" fill="#666" />
              <circle cx="37" cy="27" r="2.5" fill="#666" />
            </svg>
          </NavIcon>
          <NavLabel>设自选</NavLabel>
        </NavItem>
      </BottomNav>
    </Page>
  );
}
